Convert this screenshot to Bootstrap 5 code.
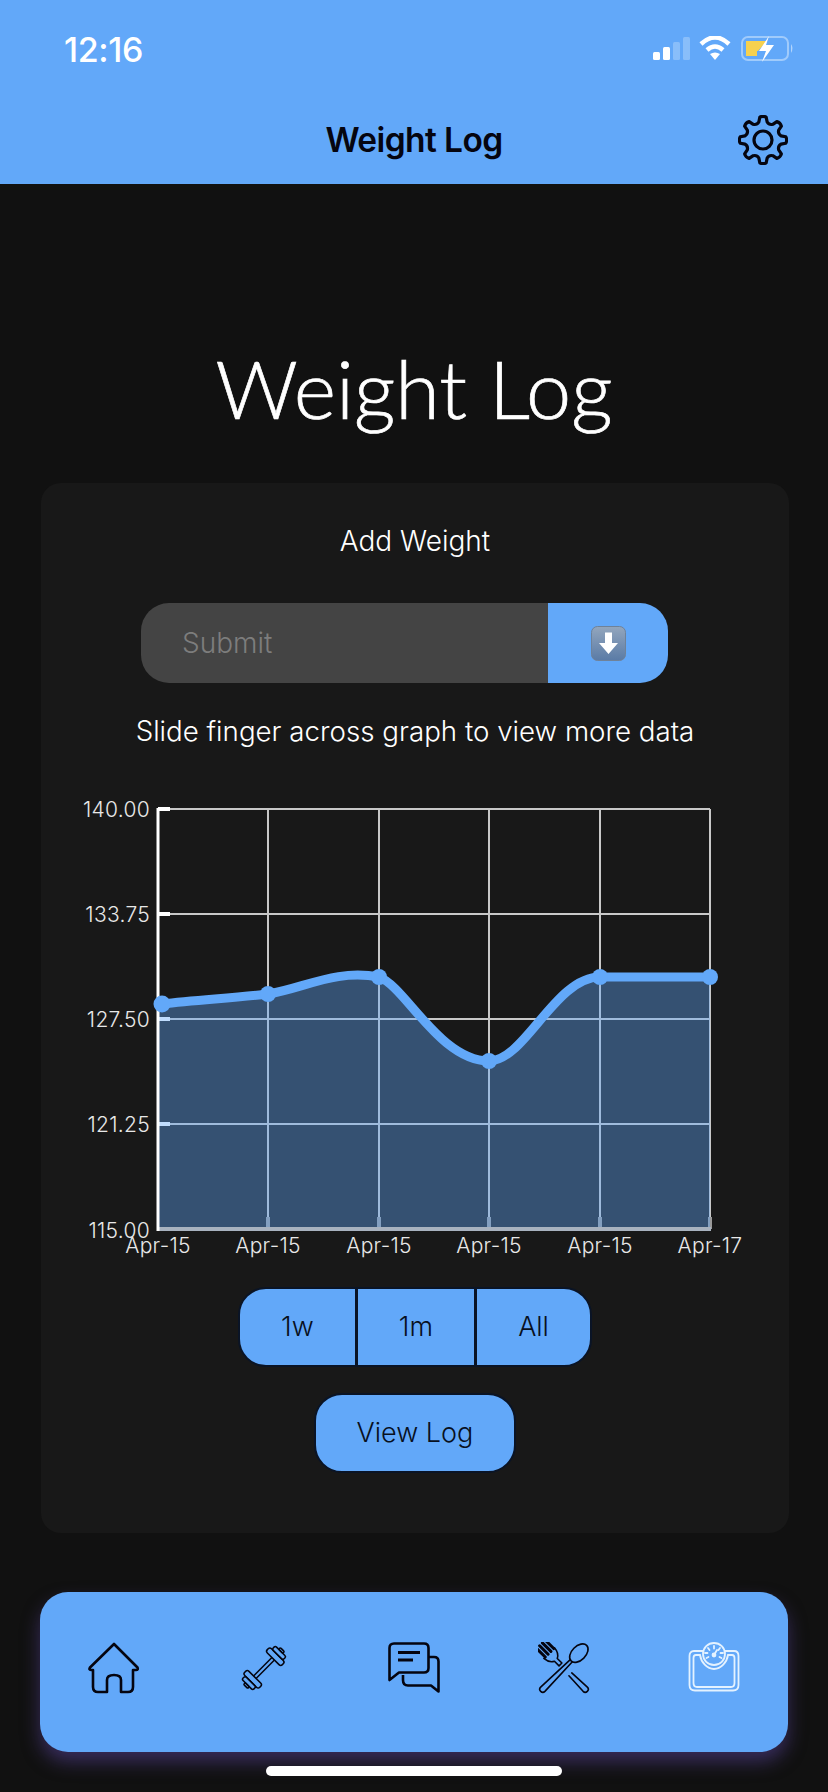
<!DOCTYPE html>
<html lang="en">
<head>
    <meta charset="UTF-8">
    <meta name="viewport" content="width=device-width, initial-scale=1.0">
    <title>Weight Log</title>
    <link href="https://cdn.jsdelivr.net/npm/bootstrap@5.3.0/dist/css/bootstrap.min.css" rel="stylesheet">
    <style>
        body { background: #111; width: 828px; height: 1792px; overflow: hidden; font-family: Inter, "Liberation Sans", sans-serif; color: #fff; }
        .wl-head { background: #62a8f9; height: 184px; padding: 36px 34px 0; }
        .wl-time { font-size: 34px; font-weight: 500; line-height: 27px; letter-spacing: -.4px; margin-left: 30px; }
        .wl-bar { height: 50px; margin-top: 52px; }
        .wl-side { flex: 1 1 0; }
        .wl-bartitle { font-size: 33.5px; font-weight: 600; color: #050510; letter-spacing: -.6px; line-height: 50px; }
        .wl-gear { margin-right: 6px; }
        .wl-big { font-family: Lato, sans-serif; font-weight: 300; font-size: 81px; line-height: 90px; text-align: center; margin: 159px 0 0; -webkit-text-stroke: .7px #fff; }
        .wl-panel { background: #181818; border: 0; border-radius: 20px; margin: 50px 39px 0 41px; height: 1050px; color: #fff; padding-top: 40px; }
        .wl-add { font-size: 28px; font-weight: 300; line-height: 36px; }
        .wl-group { width: 527px; height: 80px; margin: 44px 21px 0 0; }
        .wl-group .form-control { background: #444; border: 0; border-radius: 28px 0 0 28px; color: #fff; font-size: 28px; font-weight: 300; padding-left: 41px; }
        .wl-group .form-control::placeholder { color: #7d7d7d; }
        .wl-go { background: #62a8f9; width: 120px; border: 0; border-radius: 0 28px 28px 0; }
        .wl-hint { font-size: 27.7px; font-weight: 300; line-height: 36px; margin-top: 30px; }
        .wl-chart { display: block; margin-top: 42px; }
        .wl-chart text { font-family: Inter, sans-serif; font-weight: 300; font-size: 21px; letter-spacing: .3px; fill: #e8e8e8; }
        .wl-seg { width: 354px; height: 80px; margin-top: 16px; }
        .wl-seg .btn, .wl-view { background: #62a8f9; border: 2px solid #0a1426; color: #08101e; font-size: 27px; font-weight: 300; }
        .wl-seg .btn { border-radius: 0; padding: 0; }
        .wl-seg .btn:first-child { border-radius: 28px 0 0 28px; }
        .wl-seg .btn:last-child { border-radius: 0 28px 28px 0; }
        .wl-view { width: 202px; height: 80px; border-radius: 28px; margin-top: 26px; padding: 0; }
        .wl-nav { background: #62a8f9; height: 160px; margin: 59px 40px 0; border-radius: 28px; padding-top: 50px; gap: 98px; box-shadow: 0 10px 18px rgba(80, 62, 140, .6); }
        .wl-slot { flex: 0 0 auto; display: block; }
        .wl-homebar { width: 296px; height: 10px; background: #fff; border-radius: 5px; margin: 14px auto 0; }
    </style>
</head>
<body>
    <header class="wl-head">
        <div class="d-flex justify-content-between align-items-start">
            <div class="wl-time">12:16</div>
            <svg width="141" height="26" viewBox="653 37 141 26">
                <g fill="#fff">
                    <rect x="653" y="53" width="7" height="8" rx="1.5"/>
                    <rect x="663" y="48" width="7" height="13" rx="1.5"/>
                    <rect x="673" y="43" width="7" height="18" rx="1.5" opacity=".25"/>
                    <rect x="683" y="38" width="7" height="23" rx="1.5" opacity=".25"/>
                </g>
                <g fill="none" stroke="#fff" stroke-width="4.5">
                    <path d="M701 45 Q715 32 729 45"/>
                    <path d="M707 51 Q715 44 723 51"/>
                </g>
                <path d="M710 55 Q715 52 720 55 L715 61 Z" fill="#fff"/>
                <rect x="742" y="38" width="46" height="23" rx="6" fill="none" stroke="#fff" stroke-opacity=".4" stroke-width="2"/>
                <path d="M791 45 Q794 49 791 54 Z" fill="#fff" fill-opacity=".5"/>
                <path d="M746 42 H767 L758 52 H757 V57 H746 Z" fill="#f6d14f"/>
                <path d="M769 37 L759 52 H766 L762 63 L774 46 H766 Z" fill="#fff"/>
            </svg>
        </div>
        <div class="wl-bar d-flex align-items-center">
            <div class="wl-side"></div>
            <div class="wl-bartitle">Weight Log</div>
            <div class="wl-side d-flex justify-content-end">
                <svg class="wl-gear" width="50" height="50" viewBox="0 0 50 50" fill="none" stroke="#050510" stroke-width="3.200" stroke-linejoin="round">
                    <circle cx="25" cy="25" r="9"/>
                    <path id="gearTeeth"/>
                </svg>
            </div>
        </div>
    </header>

    <h1 class="wl-big">Weight Log</h1>

    <div class="card wl-panel align-items-center">
        <div class="wl-add">Add Weight</div>
        <div class="input-group wl-group">
            <input class="form-control" type="text" placeholder="Submit">
            <button class="btn wl-go d-flex align-items-center justify-content-center" type="button" aria-label="Submit">
                <svg width="35" height="35" viewBox="0 0 35 35">
                    <defs><linearGradient id="emoji" x1="0" y1="0" x2="0" y2="1"><stop offset="0" stop-color="#93a6bd"/><stop offset="1" stop-color="#5a7ba6"/></linearGradient></defs>
                    <rect x=".5" y=".5" width="34" height="34" rx="6" fill="url(#emoji)" stroke="#6f8299"/>
                    <path d="M14 6.500h7V17h6L17.500 28 8 17h6z" fill="#fff"/>
                </svg>
            </button>
        </div>
        <div class="wl-hint">Slide finger across graph to view more data</div>
        <svg class="wl-chart" width="748" height="480" viewBox="41 790 748 480">
            <g stroke="#c8c8c8" stroke-width="2" fill="none">
                <path d="M158 808H710M158 913H710M158 1018H710M158 1123H710"/>
                <path d="M268 808V1228M379 808V1228M489 808V1228M600 808V1228M710 808V1228"/>
            </g>
            <path d="M268 1216V1228M379 1216V1228M489 1216V1228M600 1216V1228M710 1216V1228" stroke="#999" stroke-width="4"/>
            <path d="M158 808H170M158 913H170M158 1018H170M158 1123H170" stroke="#fff" stroke-width="4"/>
            <path d="M162 1003C197 999 233 997 268 993C305 987 335 968 379 976C405 985 440 1060 489 1060C525 1060 555 976 600 976H710V1228H159V1003Z" fill="#62a8f9" fill-opacity=".4"/>
            <path d="M158 1228H711" stroke="#a8b2bf" stroke-width="4"/>
            <path d="M158 807V1230" stroke="#fff" stroke-width="3"/>
            <path d="M162 1003C197 999 233 997 268 993C305 987 335 968 379 976C405 985 440 1060 489 1060C525 1060 555 976 600 976H710" fill="none" stroke="#62a8f9" stroke-width="9"/>
            <g fill="#62a8f9">
                <circle cx="162" cy="1003" r="8.500"/><circle cx="268" cy="993" r="8"/><circle cx="379" cy="976" r="8"/>
                <circle cx="489" cy="1060" r="8"/><circle cx="600" cy="976" r="8"/><circle cx="710" cy="976" r="8"/>
            </g>
            <g text-anchor="end">
                <text x="150" y="816">140.00</text>
                <text x="150" y="921">133.75</text>
                <text x="150" y="1026">127.50</text>
                <text x="150" y="1131">121.25</text>
                <text x="150" y="1237">115.00</text>
            </g>
            <g text-anchor="middle">
                <text x="158" y="1252">Apr-15</text>
                <text x="268" y="1252">Apr-15</text>
                <text x="379" y="1252">Apr-15</text>
                <text x="489" y="1252">Apr-15</text>
                <text x="600" y="1252">Apr-15</text>
                <text x="710" y="1252">Apr-17</text>
            </g>
        </svg>
        <div class="btn-group wl-seg" role="group">
            <button class="btn" type="button">1w</button>
            <button class="btn" type="button">1m</button>
            <button class="btn" type="button">All</button>
        </div>
        <button class="btn wl-view" type="button">View Log</button>
    </div>

    <nav class="wl-nav d-flex justify-content-center">
        <svg class="wl-slot" width="52" height="52" viewBox="0 0 52 52" fill="none" stroke="#050510" stroke-width="2.600" stroke-linejoin="round">
            <path d="M26 2 49.500 25.500Q50.500 28 48 28H45V45Q45 50 40 50H33V38Q33 33 26 33T19 38V50H10Q5 50 5 45V28H3Q.5 28 2 25.500Z"/>
        </svg>
        <svg class="wl-slot" width="52" height="52" viewBox="1 1 44 44" fill="none" stroke="#050510" stroke-width="1.300" stroke-linejoin="round">
            <g transform="rotate(-45 23 23)">
                <path d="M12 21.500H34M12 24.500H34"/>
                <rect x="7" y="14" width="5" height="18" rx="2"/><rect x="3" y="16.500" width="4" height="13" rx="1.500"/><rect x="1" y="20.500" width="2" height="5" rx="1"/>
                <rect x="34" y="14" width="5" height="18" rx="2"/><rect x="39" y="16.500" width="4" height="13" rx="1.500"/><rect x="43" y="20.500" width="2" height="5" rx="1"/>
            </g>
        </svg>
        <svg class="wl-slot" width="52" height="52" viewBox="0 0 52 52" fill="none" stroke="#050510" stroke-width="2.600" stroke-linejoin="round">
            <path d="M6 1.500H36Q40.500 1.500 40.500 6V26Q40.500 30.500 36 30.500H11L1.500 38V6Q1.500 1.500 6 1.500Z"/>
            <path d="M41 15H46Q50.500 15 50.500 19.500V49.500L43 43.500H20Q15 43.500 15 38V33"/>
            <path d="M10 10.500H32M10 18H25" stroke-width="3"/>
        </svg>
        <svg class="wl-slot" width="52" height="52" viewBox="0 0 52 52" fill="none" stroke="#050510" stroke-width="1.600" stroke-linejoin="round" stroke-linecap="round">
            <g transform="rotate(-45 26 26)">
                <path d="M20.500 -7V5M24.500 -7V5M28.500 -7V5M32.500 -7V5" stroke-width="3"/>
                <path d="M18.500 5Q19 12 24 14.500V21H28V14.500Q33 12 33.500 5"/>
                <path d="M24 35 23 56Q23 59 26 59T29 56L28 35"/>
            </g>
            <g transform="rotate(45 26 26)">
                <ellipse cx="26" cy="5" rx="7" ry="11"/>
                <path d="M24.500 16 23 56Q23 59 26 59T29 56L27.500 16"/>
            </g>
        </svg>
        <svg class="wl-slot" width="52" height="52" viewBox="0 0 52 52" fill="none" stroke="#e4f2ff" stroke-width="1.800" stroke-linecap="round">
            <path d="M15 9H6Q1.500 9 1.500 14V43Q1.500 48.500 7 48.500H45Q50.500 48.500 50.500 43V14Q50.500 9 46 9H37"/>
            <path d="M12 13H8Q5.500 13 5.500 16V41Q5.500 45 9 45H43Q46.500 45 46.500 41V16Q46.500 13 44 13H40C39 20 33 27 26 27S13 20 12 13Z"/>
            <circle cx="26" cy="12" r="11"/>
            <path d="M26 4V6.500M20 6 21.500 8M32 6 30.500 8M17 11H19.500M35 11H32.500M18.500 16 20.500 15M33.500 16 31.500 15M26 13 29 8"/>
            <circle cx="26" cy="13" r="1.500" fill="#e4f2ff"/>
        </svg>
    </nav>
    <div class="wl-homebar"></div>

    <script src="https://cdn.jsdelivr.net/npm/bootstrap@5.3.0/dist/js/bootstrap.bundle.min.js"></script>
    <script>
        // gear outline: eight rounded teeth
        const pt = (a, r) => {
            const t = (a - 90) * Math.PI / 180;
            return (25 + r * Math.cos(t)).toFixed(2) + " " + (25 + r * Math.sin(t)).toFixed(2);
        };
        let d = "M" + pt(-13, 18.5);
        for (let i = 0; i < 8; i++) {
            const a = i * 45;
            d += " L" + pt(a - 8, 23) + " Q" + pt(a, 24.6) + " " + pt(a + 8, 23) + " L" + pt(a + 13, 18.5) + " Q" + pt(a + 22.5, 16) + " " + pt(a + 32, 18.5);
        }
        document.getElementById("gearTeeth").setAttribute("d", d + "Z");
    </script>
</body>
</html>
